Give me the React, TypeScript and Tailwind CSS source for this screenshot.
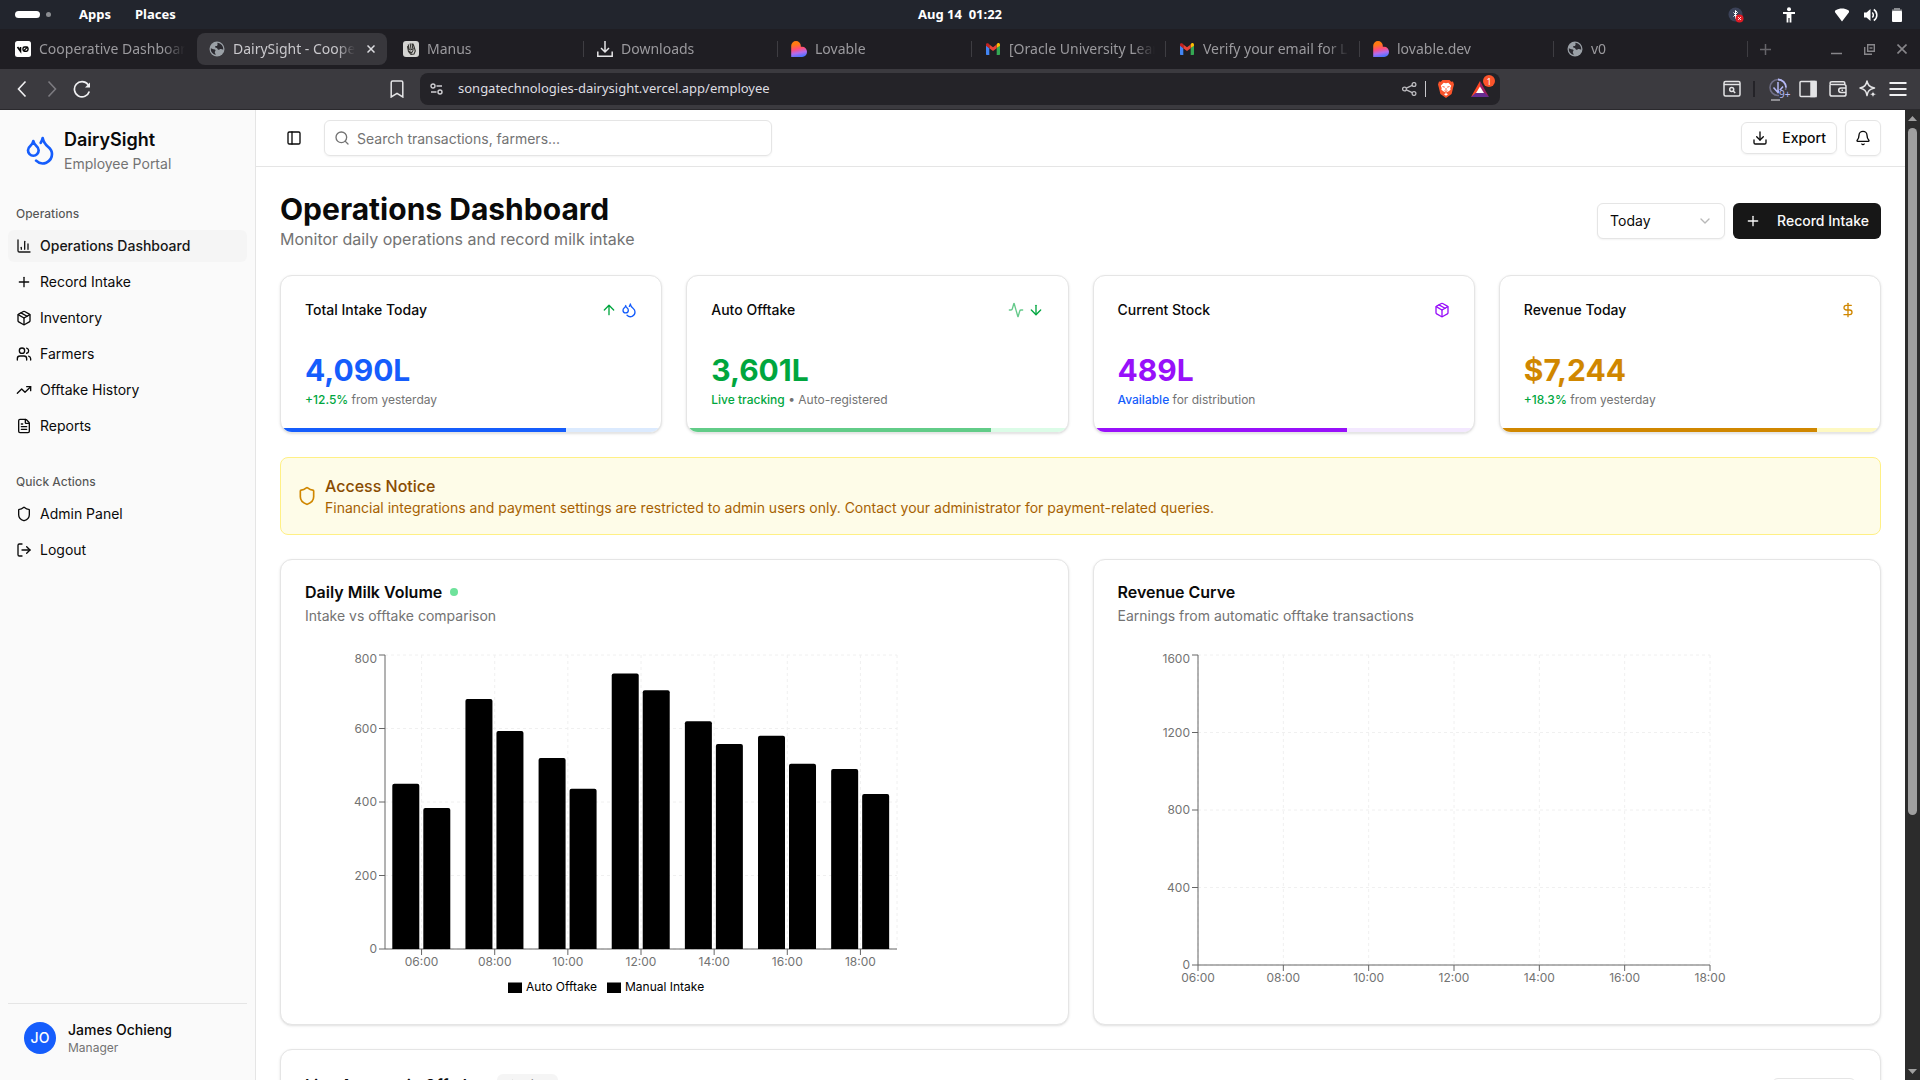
import React from "react";
import {
  Activity,
  ArrowDown,
  ArrowUp,
  Bell,
  ChartColumn,
  ChevronDown,
  DollarSign,
  Download,
  Droplets,
  FileText,
  LogOut,
  Package,
  PanelLeft,
  Plus,
  Search,
  Shield,
  TrendingUp,
  Users,
} from "lucide-react";

/* ---------- Desktop panel ---------- */

function DesktopBar() {
  return (
    <div className="grid h-[29px] shrink-0 grid-cols-[1fr_auto_1fr] items-center bg-[#22252d] text-[13px] font-bold text-white">
      <div className="flex items-center pl-[15px]">
        <span className="h-[7px] w-[25px] rounded-full bg-white" />
        <span className="ml-1.5 h-[5px] w-[5px] rounded-full bg-[#8b8d91]" />
        <button className="ml-7">Apps</button>
        <button className="ml-6">Places</button>
      </div>
      <div className="whitespace-pre">Aug 14  01:22</div>
      <div className="flex items-center justify-end pr-[17px]">
        <svg width="16" height="16" viewBox="0 0 16 16" className="mr-[38px]">
          <circle cx="7.5" cy="7.5" r="7" fill="#3b4258" />
          <path d="M5.5 5.5l4 4-2 2v-8l2 2-4 4" fill="none" stroke="#fff" strokeWidth="1" />
          <circle cx="11.5" cy="11.5" r="4" fill="#e01b24" />
          <path d="M10.2 10.2l2.6 2.6m0-2.6l-2.6 2.6" stroke="#fff" strokeWidth="1" />
        </svg>
        <svg width="14" height="16" viewBox="0 0 14 16" className="mr-[38px]" fill="#fff">
          <circle cx="7" cy="2.2" r="2" />
          <path d="M1 5h12v2H9.4v8.500H7.600V11H6.400v4.500H4.600V7H1z" />
        </svg>
        <svg width="16" height="16" viewBox="0 0 16 16" className="mr-[13px]" fill="#fff">
          <path d="M8 14.500L1 5.200C.8 4.300 1 3.700 1.700 3.300 5.500 1 10.500 1 14.300 3.300c.7.4.9 1 .7 1.900z" />
        </svg>
        <svg width="16" height="16" viewBox="0 0 16 16" className="mr-3" fill="none" stroke="#fff">
          <path d="M1 5.500h2.500L7.500 2v12l-4-3.500H1z" fill="#fff" stroke="none" />
          <path d="M9.300 5.500a3.500 3.500 0 0 1 0 5" strokeWidth="1.500" />
          <path d="M10.800 2.500a6.500 6.500 0 0 1 0 11" strokeWidth="1.500" />
        </svg>
        <svg width="12" height="14" viewBox="0 0 12 14">
          <path d="M3 0h6v1.500h2V4H1V1.500h2z" fill="#8b8d91" />
          <rect x="1" y="3" width="10" height="11" rx="1" fill="#fff" />
        </svg>
      </div>
    </div>
  );
}

/* ---------- Browser tabs ---------- */

function GlobeIcon() {
  return (
    <svg width="16" height="16" viewBox="0 0 16 16" className="shrink-0">
      <circle cx="8" cy="8" r="7.500" fill="#9aa0a6" />
      <path
        d="M8.500 1.800c-.4 1.200.5 1.700-.2 2.600-.8.900-1.900.2-2.300 1.300-.3 1 1 .9 1.800 1.300.9.4.6 1.500 1.600 1.700 1 .1 1.400-1 2.600-.7.900.2 1.300.8 2.300.5A6.300 6.300 0 0 0 8.500 1.800zM1.800 7.200c.9.100 1.500.9 2.600 1 .9.200 1.900 0 2.100.9.200 1-.8 1.300-.7 2.300.1.900.9 1.200.8 2.600A6.300 6.300 0 0 1 1.800 7.200z"
        fill="#2b2a30"
      />
    </svg>
  );
}

function V0Icon() {
  return (
    <svg width="16" height="16" viewBox="0 0 16 16" className="shrink-0">
      <rect width="16" height="16" rx="2.500" fill="#fff" />
      <path d="M2.500 6l3 4.200V6" fill="none" stroke="#000" strokeWidth="1.600" />
      <rect x="8" y="6" width="5" height="4.200" rx="1.600" fill="none" stroke="#000" strokeWidth="1.400" />
      <path d="M8.500 10l4-4" stroke="#000" strokeWidth="1.100" />
    </svg>
  );
}

function ManusIcon() {
  return (
    <svg width="16" height="16" viewBox="0 0 16 16" className="shrink-0">
      <rect width="16" height="16" rx="3" fill="#d4d4d2" />
      <path
        d="M4.500 5.500l1 5 2.500 3 3-.5 1.300-3-1.300-4.500-1-2.500M6.200 8.500L5.300 3.800M8 8l-.8-5.200M9.800 7.500L9 2.800M6.500 10.500l2 1.500 1.500-2.500M7 9l3.500-1"
        fill="none"
        stroke="#33322f"
        strokeWidth="1.100"
        strokeLinecap="round"
      />
    </svg>
  );
}

function DownloadsIcon() {
  return (
    <svg width="16" height="16" viewBox="0 0 16 16" className="shrink-0" fill="none" stroke="#e4e4e6" strokeWidth="1.500">
      <path d="M8 0v10.500M4 7l4 4 4-4M.8 10.500v4.700h14.400v-4.700" />
    </svg>
  );
}

function LovableIcon({ id }: { id: string }) {
  return (
    <svg width="16" height="16" viewBox="0 0 16 16" className="shrink-0">
      <defs>
        <linearGradient id={id} x1="0.300" y1="0" x2="0.500" y2="1">
          <stop offset="0.200" stopColor="#ff7a12" />
          <stop offset="0.500" stopColor="#ff4d7a" />
          <stop offset="0.750" stopColor="#b06cf0" />
          <stop offset="1" stopColor="#4a73ff" />
        </linearGradient>
      </defs>
      <path d="M5 0a4.800 4.800 0 0 1 4.800 4.800v1h1.400a4.800 5.100 0 0 1 0 10.200H.2V4.800A4.800 4.800 0 0 1 5 0z" fill={`url(#${id})`} />
    </svg>
  );
}

function GmailIcon() {
  return (
    <svg width="16" height="16" viewBox="0 0 16 16" className="shrink-0">
      <path d="M1 4v9c0 .6.4 1 1 1h2.300V7z" fill="#4285f4" />
      <path d="M11.700 7v7H14c.6 0 1-.4 1-1V4z" fill="#34a853" />
      <path d="M11.700 3.600V7L15 4.700V3.500c0-1.400-1.500-2-2.500-1.300z" fill="#fbbc04" />
      <path d="M4.300 7.200V3.500L8 6.300l3.700-2.800v3.700L8 10z" fill="#ea4335" />
      <path d="M1 3.500v1.300l3.300 2.400V3.500l-.8-.9C2.500 1.900 1 2.300 1 3.500z" fill="#c5221f" />
    </svg>
  );
}

type Tab = { title: string; icon: React.ReactNode; active?: boolean; divider?: boolean };

const tabs: Tab[] = [
  { title: "Cooperative Dashboard", icon: <V0Icon /> },
  { title: "DairySight - Cooperative", icon: <GlobeIcon />, active: true },
  { title: "Manus", icon: <ManusIcon /> },
  { title: "Downloads", icon: <DownloadsIcon />, divider: true },
  { title: "Lovable", icon: <LovableIcon id="lovable-a" />, divider: true },
  { title: "[Oracle University Learning", icon: <GmailIcon />, divider: true },
  { title: "Verify your email for Lovable", icon: <GmailIcon />, divider: true },
  { title: "lovable.dev", icon: <LovableIcon id="lovable-b" />, divider: true },
  { title: "v0", icon: <GlobeIcon />, divider: true },
];

function TabStrip() {
  return (
    <div className="flex h-10 shrink-0 items-center bg-[#1f1e23] pl-px text-[#9b9a9e]">
      {tabs.map((t, i) => (
        <div key={i} className="relative h-8 min-w-0 max-w-[194px] flex-1 px-0.5">
          {t.divider && <span className="absolute left-0 top-2 h-4 w-px bg-[#3e3d42]" />}
          <div
            className={
              t.active
                ? "flex h-full items-center gap-2 rounded-lg bg-[#38373c] px-3 text-[#c9c8cc]"
                : "flex h-full items-center gap-2 pl-3 pr-2"
            }
          >
            {t.icon}
            <span className="min-w-0 flex-1 overflow-hidden whitespace-nowrap text-sm mask-r-from-85%">{t.title}</span>
            {t.active && (
              <button aria-label="Close tab" className="ml-1">
                <svg width="8" height="8" viewBox="0 0 8 8" stroke="#dcdce0" strokeWidth="1.500">
                  <path d="M.5.5l7 7m0-7l-7 7" />
                </svg>
              </button>
            )}
          </div>
        </div>
      ))}
      <span className="h-4 w-px bg-[#3e3d42]" />
      <button aria-label="New tab" className="ml-3">
        <svg width="11" height="11" viewBox="0 0 11 11" stroke="#66656a" strokeWidth="1.500">
          <path d="M5.500 0v11M0 5.500h11" />
        </svg>
      </button>
      <div className="ml-auto flex items-center gap-[22px] pr-[13px]">
        <button aria-label="Minimize">
          <svg width="11" height="11" viewBox="0 0 11 11" stroke="#87868a" strokeWidth="1.500">
            <path d="M0 9.500h11" />
          </svg>
        </button>
        <button aria-label="Restore">
          <svg width="11" height="11" viewBox="0 0 11 11" fill="none" stroke="#87868a" strokeWidth="1.400">
            <path d="M3.700.7h6.600v6.600H3.700zM.7 3v7.300H8" />
            <path d="M5.500 4h3" />
          </svg>
        </button>
        <button aria-label="Close window">
          <svg width="10" height="10" viewBox="0 0 10 10" stroke="#87868a" strokeWidth="1.600">
            <path d="M.5.5l9 9m0-9l-9 9" />
          </svg>
        </button>
      </div>
    </div>
  );
}

/* ---------- Browser toolbar ---------- */

function Toolbar() {
  return (
    <div className="grid h-[41px] shrink-0 grid-cols-[7fr_18fr_7fr] items-center border-b border-[#2a292d] bg-[#3b3a3f] text-[#e4e4e6]">
      <div className="flex items-center gap-3 pl-[13px] pr-3.5">
        <button aria-label="Back">
          <svg width="18" height="18" viewBox="0 0 18 18" fill="none" stroke="#f0f0f2" strokeWidth="1.600">
            <path d="M12.500 1.500L5.500 9l7 7.500" />
          </svg>
        </button>
        <button aria-label="Forward">
          <svg width="18" height="18" viewBox="0 0 18 18" fill="none" stroke="#7c7b80" strokeWidth="1.600">
            <path d="M5.500 1.500l7 7.500-7 7.500" />
          </svg>
        </button>
        <button aria-label="Reload">
          <svg width="18" height="18" viewBox="0 0 18 18" fill="none" stroke="#f0f0f2" strokeWidth="1.700">
            <path d="M16.300 11.500A7.600 7.600 0 1 1 15 4.500l1.200 1.800" />
            <path d="M17 2.500v5h-5z" fill="#f0f0f2" stroke="none" />
          </svg>
        </button>
        <button aria-label="Bookmark" className="ml-auto">
          <svg width="18" height="18" viewBox="0 0 18 18" fill="none" stroke="#e4e4e6" strokeWidth="1.500">
            <path d="M3.200 2.500c0-.8.6-1.500 1.400-1.500h8.800c.8 0 1.400.7 1.400 1.500V17L9 13.300 3.200 17z" />
          </svg>
        </button>
      </div>
      <div className="flex h-8 min-w-0 items-center rounded-lg bg-[#242328] px-2.5">
        <svg width="13" height="12" viewBox="0 0 13 12" fill="none" stroke="#cfced2" strokeWidth="1.400" className="shrink-0">
          <circle cx="3" cy="3" r="2" />
          <path d="M6.500 3H12M1 9h5.500" />
          <circle cx="10" cy="9" r="2" />
        </svg>
        <label htmlFor="address" className="sr-only">
          Address
        </label>
        <input
          id="address"
          readOnly
          value="songatechnologies-dairysight.vercel.app/employee"
          className="ml-[15px] min-w-0 flex-1 bg-transparent text-[13px] text-[#dedde1] outline-none"
        />
        <button aria-label="Share">
          <svg width="15" height="14" viewBox="0 0 15 14" fill="none" stroke="#bdbcc0" strokeWidth="1.300">
            <circle cx="2.500" cy="7" r="1.900" />
            <circle cx="12" cy="2.500" r="1.900" />
            <circle cx="12" cy="11.500" r="1.900" />
            <path d="M4.300 6.200l5.900-2.800M4.300 7.800l5.900 2.800" />
          </svg>
        </button>
        <span className="ml-2 mr-3 h-4 w-px bg-[#c9c8cc]" />
        <button aria-label="Brave Shields">
          <svg width="16" height="18" viewBox="0 0 16 18">
            <path d="M4.500 0h7l1.700 1.700 1.800-.2 1 3-.7 2.500-1.700 7L8 18l-5.600-4L.7 7 0 4.500l1-3 1.800.2z" fill="#fb542b" />
            <path
              d="M8 3.200l2.300-.4 2.900 3-.9 2.300.3 1.700-2.300 1.600L8 12.400l-2.300-1-2.300-1.600.3-1.700-.9-2.300 2.900-3zM8 13l2 1.200L8 15.700 6 14.200z"
              fill="#fff"
            />
            <path d="M4.500 6.500l2.300.7M11.500 6.500l-2.300.7M8 8v2.500M6.500 10.700L8 11.500l1.500-.8" stroke="#fb542b" strokeWidth="0.900" fill="none" />
          </svg>
        </button>
        <button aria-label="Brave Rewards" className="relative ml-[17px] mr-px">
          <svg width="18" height="16" viewBox="0 0 18 16">
            <path d="M9 0L0 16l9-5z" fill="#ff4724" />
            <path d="M9 0l9 16-6-4L9 6z" fill="#9e1f63" />
            <path d="M0 16h18l-4.500-4h-9z" fill="#662d91" />
            <path d="M9 5.500L5 12h8z" fill="#fff" />
          </svg>
          <span className="absolute -right-1.5 -top-1.5 flex h-3 w-3 items-center justify-center rounded-full bg-[#fb542b] text-[9px] leading-none text-white">
            1
          </span>
        </button>
      </div>
      <div className="flex items-center justify-end gap-3 pr-[13px]">
        <button aria-label="Search tabs">
          <svg width="18" height="18" viewBox="0 0 18 18" fill="none" stroke="#e4e4e6" strokeWidth="1.500">
            <rect x="1" y="1.500" width="16" height="14.500" rx="1.500" />
            <path d="M1 4.500h16" />
            <circle cx="8.700" cy="9.500" r="2" />
            <path d="M10.200 11l2 2" />
          </svg>
        </button>
        <span className="mr-0.5 h-4 w-0.5 bg-[#242328]" />
        <button aria-label="Downloads extension">
          <svg width="18" height="24" viewBox="0 0 18 24" fill="none" className="overflow-visible">
            <circle cx="9" cy="10.500" r="8" stroke="#6f6e87" strokeWidth="1.600" />
            <path d="M9 2.500a8 8 0 0 1 8 8" stroke="#b5b8f5" strokeWidth="1.800" />
            <path d="M9 5v10M4.500 10.500L9 15.500l5-6" stroke="#b5b8f5" strokeWidth="1.500" />
            <path d="M2 23h9" stroke="#8f8e93" strokeWidth="2" />
            <rect x="10" y="13" width="11" height="9" fill="#3b3a3f" />
            <text x="10" y="21" fontSize="10" fill="#b5b8f5">
              9+
            </text>
          </svg>
        </button>
        <button aria-label="Side panel">
          <svg width="18" height="18" viewBox="0 0 18 18" fill="none" stroke="#e4e4e6" strokeWidth="1.500">
            <rect x="1" y="1.500" width="16" height="15" rx="1" />
            <path d="M12 1.500h5v15h-5z" fill="#e4e4e6" />
          </svg>
        </button>
        <button aria-label="Wallet">
          <svg width="18" height="18" viewBox="0 0 18 18" fill="none" stroke="#e4e4e6" strokeWidth="1.500">
            <path d="M1 4.500v9.700c0 1.200.8 1.900 2 1.900h12c1.200 0 2-.7 2-1.900V6.500c0-1.200-.8-2-2-2H2.800C1.800 4.500 1 4 1 3.200 1 2.300 1.700 1.700 2.800 1.700h11.700c.8 0 1.300.5 1.300 1.300v1.500" />
            <path d="M17 8h-5c-1.400 0-2.300.9-2.300 2.300s.9 2.200 2.300 2.200h5M12.500 10.300h1.500" />
          </svg>
        </button>
        <button aria-label="Leo AI">
          <svg width="18" height="18" viewBox="0 0 18 18" fill="none" stroke="#e4e4e6" strokeWidth="1.500" strokeLinejoin="round">
            <path d="M8 1c.9 4.300 2.200 5.700 7.500 7-5.300 1.300-6.600 2.700-7.500 7.500C7.100 10.700 5.800 9.300 1 8c4.800-1.300 6.100-2.700 7-7z" />
            <path
              d="M14 11c.4 2 1.100 2.700 3.500 3.300-2.400.5-3.100 1.200-3.500 3.200-.4-2-1.100-2.700-3.500-3.200 2.400-.6 3.100-1.300 3.500-3.300z"
              fill="#e4e4e6"
              stroke="#3b3a3f"
              strokeWidth="0.500"
            />
          </svg>
        </button>
        <button aria-label="Menu">
          <svg width="18" height="18" viewBox="0 0 18 18" stroke="#f0f0f2" strokeWidth="1.800">
            <path d="M.5 3h17M.5 9h17M.5 15h17" />
          </svg>
        </button>
      </div>
    </div>
  );
}

/* ---------- Sidebar ---------- */

type NavItem = { label: string; icon: typeof Plus; active?: boolean };

const operations: NavItem[] = [
  { label: "Operations Dashboard", icon: ChartColumn, active: true },
  { label: "Record Intake", icon: Plus },
  { label: "Inventory", icon: Package },
  { label: "Farmers", icon: Users },
  { label: "Offtake History", icon: TrendingUp },
  { label: "Reports", icon: FileText },
];

const quickActions: NavItem[] = [
  { label: "Admin Panel", icon: Shield },
  { label: "Logout", icon: LogOut },
];

function NavGroup({ title, items }: { title: string; items: NavItem[] }) {
  return (
    <nav aria-label={title} className="p-2">
      <div className="flex h-8 items-center px-2 text-xs font-medium text-[#0a0a0a]/70">{title}</div>
      <ul className="flex flex-col gap-1">
        {items.map(({ label, icon: Icon, active }) => (
          <li key={label}>
            <a
              href="#"
              className={
                active
                  ? "flex h-8 items-center gap-2 rounded-md bg-neutral-100 px-2 text-sm font-medium text-neutral-900"
                  : "flex h-8 items-center gap-2 rounded-md px-2 text-sm text-neutral-950"
              }
            >
              <Icon size={16} />
              {label}
            </a>
          </li>
        ))}
      </ul>
    </nav>
  );
}

function Sidebar() {
  return (
    <aside className="flex w-64 shrink-0 flex-col border-r border-neutral-200 bg-neutral-50">
      <div className="p-2">
        <div className="flex items-center gap-2 px-4 py-2">
          <Droplets size={32} className="text-blue-600" />
          <div>
            <div className="text-lg/7 font-semibold">DairySight</div>
            <div className="text-sm text-neutral-500">Employee Portal</div>
          </div>
        </div>
      </div>
      <div className="flex flex-1 flex-col gap-2">
        <NavGroup title="Operations" items={operations} />
        <NavGroup title="Quick Actions" items={quickActions} />
      </div>
      <div className="p-2">
        <div className="flex items-center gap-3 border-t border-neutral-200 p-4">
          <div className="flex h-8 w-8 items-center justify-center rounded-full bg-blue-600 text-sm font-medium text-white">
            JO
          </div>
          <div>
            <div className="text-sm font-medium">James Ochieng</div>
            <div className="text-xs text-neutral-500">Manager</div>
          </div>
        </div>
      </div>
    </aside>
  );
}

/* ---------- Stat cards ---------- */

type Stat = {
  title: string;
  icons: React.ReactNode;
  value: string;
  valueClass: string;
  lead: string;
  leadClass: string;
  rest: string;
  trackClass: string;
  barClass: string;
};

const stats: Stat[] = [
  {
    title: "Total Intake Today",
    icons: (
      <>
        <ArrowUp size={16} className="text-green-600" />
        <Droplets size={16} className="text-blue-600" />
      </>
    ),
    value: "4,090L",
    valueClass: "text-3xl font-bold text-blue-600",
    lead: "+12.5%",
    leadClass: "font-medium text-green-600",
    rest: " from yesterday",
    trackClass: "absolute inset-x-0 bottom-0 h-1 bg-blue-100",
    barClass: "h-full w-3/4 bg-blue-600",
  },
  {
    title: "Auto Offtake",
    icons: (
      <>
        <Activity size={16} className="text-green-600 opacity-60" />
        <ArrowDown size={16} className="text-green-600" />
      </>
    ),
    value: "3,601L",
    valueClass: "text-3xl font-bold text-green-600",
    lead: "Live tracking",
    leadClass: "font-medium text-green-600",
    rest: " • Auto-registered",
    trackClass: "absolute inset-x-0 bottom-0 h-1 bg-green-100",
    barClass: "h-full w-4/5 bg-[#62cc88]",
  },
  {
    title: "Current Stock",
    icons: <Package size={16} className="text-purple-600" />,
    value: "489L",
    valueClass: "text-3xl font-bold text-purple-600",
    lead: "Available",
    leadClass: "font-medium text-blue-600",
    rest: " for distribution",
    trackClass: "absolute inset-x-0 bottom-0 h-1 bg-purple-100",
    barClass: "h-full w-2/3 bg-purple-600",
  },
  {
    title: "Revenue Today",
    icons: <DollarSign size={16} className="text-yellow-600" />,
    value: "$7,244",
    valueClass: "text-3xl font-bold text-yellow-600",
    lead: "+18.3%",
    leadClass: "font-medium text-green-600",
    rest: " from yesterday",
    trackClass: "absolute inset-x-0 bottom-0 h-1 bg-yellow-100",
    barClass: "h-full w-5/6 bg-yellow-600",
  },
];

function StatCard({ stat }: { stat: Stat }) {
  return (
    <section className="relative overflow-hidden rounded-xl border border-neutral-200 bg-white p-6 shadow-sm">
      <div className="flex items-center justify-between">
        <h2 className="text-sm font-medium">{stat.title}</h2>
        <div className="flex gap-1">{stat.icons}</div>
      </div>
      <div className="mt-8">
        <div className={stat.valueClass}>{stat.value}</div>
        <p className="mt-1 text-xs text-neutral-500">
          <span className={stat.leadClass}>{stat.lead}</span>
          {stat.rest}
        </p>
      </div>
      <div className={stat.trackClass}>
        <div className={stat.barClass} />
      </div>
    </section>
  );
}

/* ---------- Charts ---------- */

const hours = ["06:00", "08:00", "10:00", "12:00", "14:00", "16:00", "18:00"];
const intake = [450, 680, 520, 750, 620, 580, 490];
const offtake = [384, 593, 436, 704, 558, 504, 422];

const LEFT = 80;
const TOP = 5;
const PLOT_W = 512;

function Axes({ height, ticks, xs, gridXs }: { height: number; ticks: number[]; xs: number[]; gridXs: number[] }) {
  const max = ticks[ticks.length - 1];
  const bottom = TOP + height;
  const y = (v: number) => bottom - (v / max) * height;
  return (
    <>
      <g stroke="#f0f0f0" strokeDasharray="3 3">
        {ticks.map((t) => (
          <line key={t} x1={LEFT} x2={LEFT + PLOT_W} y1={y(t)} y2={y(t)} />
        ))}
        {gridXs.map((x) => (
          <line key={x} x1={x} x2={x} y1={TOP} y2={bottom} />
        ))}
      </g>
      <g stroke="#666">
        <path d={`M${LEFT} ${TOP}V${bottom}H${LEFT + PLOT_W}`} fill="none" />
        {ticks.map((t) => (
          <line key={t} x1={LEFT - 6} x2={LEFT} y1={y(t)} y2={y(t)} />
        ))}
        {xs.map((x) => (
          <line key={x} x1={x} x2={x} y1={bottom} y2={bottom + 6} />
        ))}
      </g>
      <g fill="#737373">
        {ticks.map((t) => (
          <text key={t} x={LEFT - 8} y={t === max ? TOP + 8 : y(t) + 4} textAnchor="end">
            {t}
          </text>
        ))}
        {xs.map((x, i) => (
          <text key={x} x={x} y={bottom + 17} textAnchor="middle">
            {hours[i]}
          </text>
        ))}
      </g>
    </>
  );
}

function bar(x: number, w: number, v: number, bottom: number, height: number) {
  const top = bottom - (v / 800) * height;
  return `M${x} ${bottom}V${top + 2}a2 2 0 0 1 2-2h${w - 4}a2 2 0 0 1 2 2V${bottom}z`;
}

function VolumeChart() {
  const height = 294;
  const bottom = TOP + height;
  const band = PLOT_W / 7;
  const xs = hours.map((_, i) => LEFT + band * (i + 0.5));
  return (
    <svg width="622" height="350" viewBox="0 0 622 350" className="max-w-full text-xs" role="img" aria-label="Daily milk volume">
      <Axes height={height} ticks={[0, 200, 400, 600, 800]} xs={xs} gridXs={[...xs, LEFT + PLOT_W]} />
      {hours.map((h, i) => {
        const x = LEFT + band * i + 7.3;
        return (
          <g key={h}>
            <path d={bar(x, 27, intake[i], bottom, height)} />
            <path d={bar(x + 31, 27, offtake[i], bottom, height)} />
          </g>
        );
      })}
      <rect x="203" y="332.500" width="14" height="10.500" />
      <text x="221" y="341">Auto Offtake</text>
      <rect x="302" y="332.500" width="14" height="10.500" />
      <text x="320" y="341">Manual Intake</text>
    </svg>
  );
}

function RevenueChart() {
  const xs = hours.map((_, i) => LEFT + (PLOT_W / 6) * i);
  return (
    <svg width="622" height="350" viewBox="0 0 622 350" className="max-w-full text-xs" role="img" aria-label="Revenue curve">
      <Axes height={310} ticks={[0, 400, 800, 1200, 1600]} xs={xs} gridXs={xs} />
    </svg>
  );
}

function ChartCard({ title, text, dot, children }: { title: string; text: string; dot?: boolean; children: React.ReactNode }) {
  return (
    <section className="rounded-xl border border-neutral-200 bg-white p-6 shadow-sm">
      <div className="flex items-center gap-2">
        <h2 className="text-base leading-none font-semibold">{title}</h2>
        {dot && <span className="h-2 w-2 rounded-full bg-[#6ee29b]" />}
      </div>
      <p className="mt-1.5 text-sm text-neutral-500">{text}</p>
      <div className="mt-6">{children}</div>
    </section>
  );
}

/* ---------- Page ---------- */

function Dashboard() {
  return (
    <main className="flex flex-col gap-6 p-6">
      <div className="flex items-center justify-between">
        <div>
          <h1 className="text-3xl font-bold">Operations Dashboard</h1>
          <p className="text-base text-neutral-500">Monitor daily operations and record milk intake</p>
        </div>
        <div className="flex gap-2">
          <div className="relative">
            <label htmlFor="period" className="sr-only">
              Period
            </label>
            <select
              id="period"
              className="h-9 w-32 appearance-none rounded-md border border-neutral-200 bg-white px-3 text-sm shadow-xs"
            >
              <option>Today</option>
            </select>
            <ChevronDown size={16} className="pointer-events-none absolute right-3 top-2.5 text-neutral-500 opacity-50" />
          </div>
          <button className="flex h-9 items-center gap-4 rounded-md bg-neutral-900 px-3 text-sm font-medium text-neutral-50">
            <Plus size={16} />
            Record Intake
          </button>
        </div>
      </div>

      <div className="grid grid-cols-4 gap-6">
        {stats.map((s) => (
          <StatCard key={s.title} stat={s} />
        ))}
      </div>

      <div className="flex items-center gap-2 rounded-lg border border-yellow-200 bg-yellow-50 p-4">
        <Shield size={20} className="text-yellow-600" />
        <div>
          <div className="text-base font-medium text-yellow-800">Access Notice</div>
          <p className="text-sm text-yellow-700">
            Financial integrations and payment settings are restricted to admin users only. Contact your administrator for
            payment-related queries.
          </p>
        </div>
      </div>

      <div className="grid grid-cols-2 gap-6">
        <ChartCard title="Daily Milk Volume" text="Intake vs offtake comparison" dot>
          <VolumeChart />
        </ChartCard>
        <ChartCard title="Revenue Curve" text="Earnings from automatic offtake transactions">
          <RevenueChart />
        </ChartCard>
      </div>

      <section className="flex items-start justify-between rounded-xl border border-neutral-200 bg-white p-6 shadow-sm">
        <div className="flex items-center gap-4">
          <h2 className="text-base leading-none font-semibold">Live Automatic Offtake</h2>
          <span className="flex items-center gap-1 rounded-md border border-transparent bg-neutral-100 px-2.5 py-0.5 text-xs font-medium">
            <Activity size={12} />
            Live
          </span>
        </div>
        <button className="mt-1 h-8 rounded-md border border-neutral-200 px-3.5 text-sm font-medium shadow-xs">View All</button>
      </section>
    </main>
  );
}

function AppHeader() {
  return (
    <div className="shrink-0 border-b border-neutral-200 bg-white">
      <header className="flex h-14 items-center gap-4 px-6">
        <button aria-label="Toggle sidebar" className="flex h-7 w-7 items-center justify-center">
          <PanelLeft size={16} />
        </button>
        <div className="relative w-full max-w-md">
          <Search size={16} className="absolute left-2.5 top-2.5 text-neutral-500" />
          <label htmlFor="search" className="sr-only">
            Search
          </label>
          <input
            id="search"
            type="search"
            placeholder="Search transactions, farmers..."
            className="h-9 w-full rounded-md border border-neutral-200 pl-8 pr-3 text-sm shadow-xs placeholder:text-neutral-500"
          />
        </div>
        <div className="ml-auto flex items-center gap-2">
          <button className="flex h-8 items-center gap-3.5 rounded-md border border-neutral-200 px-2.5 text-sm font-medium shadow-xs">
            <Download size={16} />
            Export
          </button>
          <button
            aria-label="Notifications"
            className="flex h-9 w-9 items-center justify-center rounded-md border border-neutral-200 shadow-xs"
          >
            <Bell size={16} />
          </button>
        </div>
      </header>
    </div>
  );
}

function ScrollTrack() {
  return (
    <div className="flex w-[15px] shrink-0 flex-col items-center bg-[#2c2c2c] py-1.5">
      <svg width="9" height="5" viewBox="0 0 9 5" fill="#a0a0a0">
        <path d="M0 5l4.500-5L9 5z" />
      </svg>
      <div className="mt-[7px] w-full flex-1 px-[3px]">
        <div className="h-[73%] rounded-full bg-[#9f9f9f]" />
      </div>
      <svg width="9" height="5" viewBox="0 0 9 5" fill="#a0a0a0">
        <path d="M0 0l4.500 5L9 0z" />
      </svg>
    </div>
  );
}

export default function App() {
  return (
    <div className="flex h-screen flex-col overflow-hidden font-['Noto_Sans',sans-serif]">
      <DesktopBar />
      <TabStrip />
      <Toolbar />
      <div className="flex min-h-0 flex-1 bg-white font-['Inter',sans-serif] text-neutral-950">
        <Sidebar />
        <div className="flex min-w-0 flex-1 flex-col">
          <AppHeader />
          <div className="min-h-0 flex-1 overflow-hidden">
            <Dashboard />
          </div>
        </div>
        <ScrollTrack />
      </div>
    </div>
  );
}
